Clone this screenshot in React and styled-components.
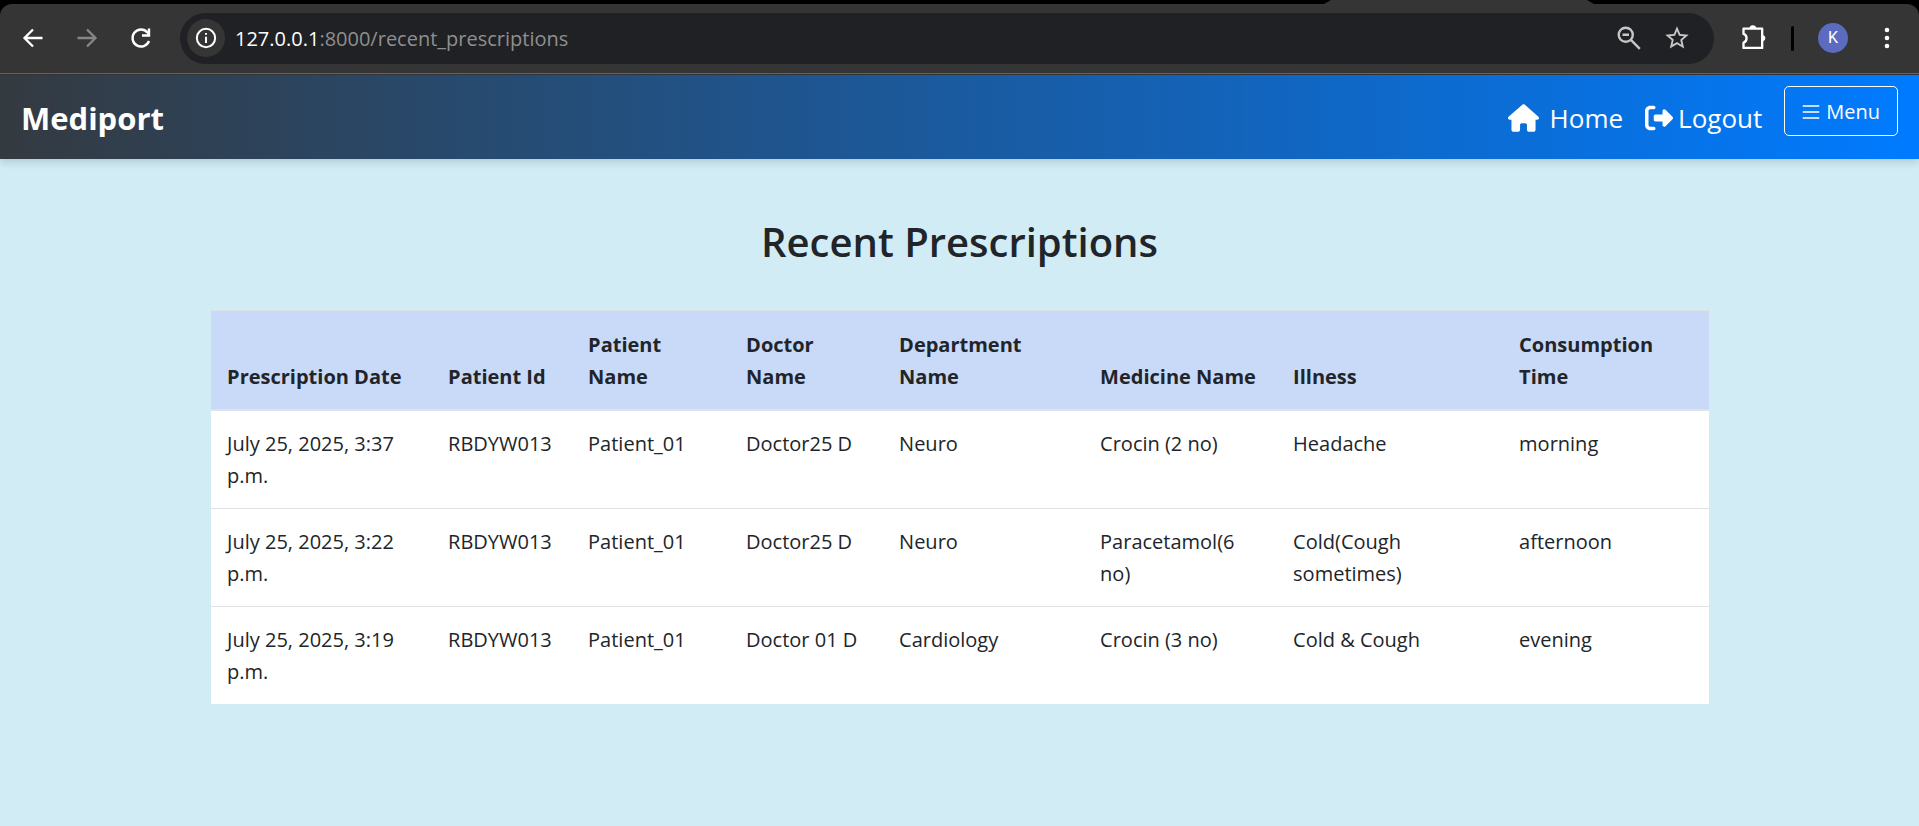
import React from "react";
import styled, { createGlobalStyle } from "styled-components";

const GlobalStyle = createGlobalStyle`
  *, *::before, *::after { box-sizing: border-box; }
  body {
    margin: 0;
    background: #d1ecf4;
    color: #212529;
    font-family: "Segoe UI", "Open Sans", sans-serif;
    font-size: 20px;
    line-height: 32px;
  }
`;

const Chrome = styled.header`
  background: #000;
`;

const TabStrip = styled.div`
  display: flex;
  justify-content: flex-end;
  height: 4px;
  padding-right: 325px;
`;

const ActiveTab = styled.div`
  width: 270px;
  background: #353535;
  clip-path: polygon(7px 0, 263px 0, 270px 100%, 0 100%);
`;

const Toolbar = styled.div`
  display: flex;
  align-items: center;
  height: 71px;
  padding: 0 13px 3px 14px;
  border-radius: 12px 12px 0 0;
  background: #353535;
  box-shadow: inset 0 -1px #353535, inset 0 -2px #666;
`;

const IconButton = styled.button`
  display: flex;
  align-items: center;
  justify-content: center;
  flex: none;
  width: 38px;
  height: 38px;
  margin-right: ${(p) => p.$gap || 0}px;
  padding: 0;
  border: 0;
  border-radius: 19px;
  background: ${(p) => p.$fill || "none"};
  color: ${(p) => p.$color || "#fff"};
`;

const AddressBar = styled.div`
  display: flex;
  align-items: center;
  flex: 1;
  height: 51px;
  margin-right: 21px;
  padding: 0 18px 0 7px;
  border-radius: 26px;
  background: #202124;
`;

const Address = styled.div`
  flex: 1;
  padding: 2px 0 0 10px;
  color: #8f8f8f;
  b { color: #fff; font-weight: 400; }
`;

const Divider = styled.div`
  width: 3px;
  height: 25px;
  margin: 0 24px 0 18px;
  border-radius: 2px;
  background: #000;
`;

const Avatar = styled.button`
  width: 30px;
  height: 30px;
  margin-right: 20px;
  padding: 0;
  border: 0;
  border-radius: 50%;
  background: #5c6bc0;
  color: #fff;
  font: 16px/30px Roboto, sans-serif;
`;

const Navbar = styled.nav`
  display: flex;
  align-items: center;
  height: 84px;
  padding: 2px 21px 0;
  background: linear-gradient(to right, #343a40, #007bff);
  box-shadow: 0 3px 8px rgba(0, 0, 0, 0.15);
`;

const Brand = styled.a`
  margin-right: auto;
  color: #fff;
  font-size: 31px;
  font-weight: 700;
  text-decoration: none;
`;

const NavLink = styled.a`
  display: flex;
  align-items: center;
  gap: ${(p) => p.$gap}px;
  margin-right: 22px;
  color: #fff;
  font-size: 26px;
  text-decoration: none;
`;

const MenuButton = styled.button`
  align-self: flex-start;
  display: flex;
  align-items: center;
  gap: 6px;
  height: 50px;
  margin-top: 9px;
  padding: 2px 17px 0;
  border: 1px solid #fff;
  border-radius: 5px;
  background: none;
  color: #fff;
  font: inherit;
`;

const Main = styled.main`
  padding: 55px 11% 0;
`;

const Title = styled.h1`
  margin: 0 0 40px;
  font-size: 40px;
  font-weight: 600;
  line-height: 56px;
  text-align: center;
`;

const Table = styled.table`
  width: 100%;
  table-layout: fixed;
  border-collapse: collapse;
  background: #fff;
`;

const HeadCell = styled.th`
  padding: 18px 16px 16px;
  border-top: 1px solid #dee2e6;
  border-bottom: 2px solid #dee2e6;
  background: #c9d9f8;
  font-weight: 700;
  text-align: left;
  vertical-align: bottom;
`;

const Cell = styled.td`
  padding: 17px 16px 16px;
  border-top: 1px solid #dee2e6;
  text-align: left;
  vertical-align: top;
`;

const Col = styled.col`
  width: ${(p) => p.$width}px;
`;

const columns = [
  ["Prescription Date", 221],
  ["Patient Id", 140],
  ["Patient Name", 158],
  ["Doctor Name", 153],
  ["Department Name", 201],
  ["Medicine Name", 193],
  ["Illness", 226],
  ["Consumption Time", 206],
];

const rows = [
  ["July 25, 2025, 3:37 p.m.", "RBDYW013", "Patient_01", "Doctor25 D", "Neuro", "Crocin (2 no)", "Headache", "morning"],
  ["July 25, 2025, 3:22 p.m.", "RBDYW013", "Patient_01", "Doctor25 D", "Neuro", "Paracetamol(6 no)", "Cold(Cough sometimes)", "afternoon"],
  ["July 25, 2025, 3:19 p.m.", "RBDYW013", "Patient_01", "Doctor 01 D", "Cardiology", "Crocin (3 no)", "Cold & Cough", "evening"],
];

const Stroke = ({ size = 24, width = 2, children }) => (
  <svg width={size} height={size} viewBox="0 0 24 24" fill="none" stroke="currentColor" strokeWidth={width} aria-hidden="true">
    {children}
  </svg>
);

const Solid = ({ size = 24, box = "0 0 24 24", height, children }) => (
  <svg width={size} height={height || size} viewBox={box} fill="currentColor" aria-hidden="true">
    {children}
  </svg>
);

export default function App() {
  return (
    <>
      <GlobalStyle />
      <Chrome>
        <TabStrip><ActiveTab /></TabStrip>
        <Toolbar>
          <IconButton aria-label="Back" $gap={16}>
            <Stroke width={2.3}><path d="M21.500 12H4M12 3.500L3.500 12L12 20.500" /></Stroke>
          </IconButton>
          <IconButton aria-label="Forward" $gap={16} $color="#868686">
            <Stroke width={2.3}><path d="M2.500 12H20M12 3.500L20.500 12L12 20.500" /></Stroke>
          </IconButton>
          <IconButton aria-label="Reload" $gap={20}>
            <Stroke width={2.4}><path d="M20 15A8.500 8.500 0 1 1 18.500 6.500L20 8.500M20 2.500V9.500H13" /></Stroke>
          </IconButton>
          <AddressBar>
            <IconButton aria-label="Site information" $fill="#353535">
              <Stroke size={22} width={2.2}><circle cx="12" cy="12" r="10" /><path d="M12 10.500V17.500M12 6.500V8.500" /></Stroke>
            </IconButton>
            <Address><b>127.0.0.1</b>:8000/recent_prescriptions</Address>
            <IconButton aria-label="Zoom" $gap={10} $color="#c7c7c7">
              <Stroke size={26} width={2.2}><circle cx="9" cy="9" r="6.500" /><path d="M6 9H12M13.500 13.500L22 22" /></Stroke>
            </IconButton>
            <IconButton aria-label="Bookmark this page" $color="#c7c7c7">
              <Solid size={28}><path d="M22 9.240l-7.190-.62L12 2 9.190 8.630 2 9.240l5.460 4.730L5.820 21 12 17.270 18.180 21l-1.630-7.030L22 9.240zM12 15.400l-3.760 2.270 1-4.280-3.320-2.880 4.380-.38L12 6.100l1.710 4.040 4.380.38-3.320 2.880 1 4.280L12 15.400z" /></Solid>
            </IconButton>
          </AddressBar>
          <IconButton aria-label="Extensions">
            <Stroke size={28}><path d="M3 4H19V20.500H3V16C6.500 15 6.500 9.500 3 8.500Z" strokeLinejoin="round" /><path d="M8 4A3 3 0 0 1 14 4ZM19.500 9.500A2.800 2.800 0 0 1 19.500 15Z" fill="currentColor" stroke="none" /></Stroke>
          </IconButton>
          <Divider />
          <Avatar aria-label="Profile">K</Avatar>
          <IconButton aria-label="Browser menu">
            <Solid size={24}><circle cx="12" cy="4" r="2.300" /><circle cx="12" cy="12" r="2.300" /><circle cx="12" cy="20" r="2.300" /></Solid>
          </IconButton>
        </Toolbar>
      </Chrome>
      <Navbar>
        <Brand href="#">Mediport</Brand>
        <NavLink href="#" $gap={11}>
          <Solid size={31} height={28} box="0 0 576 512"><path d="M575.800 255.500c0 18-15 32.100-32 32.100h-32l.7 160.200c0 2.700-.2 5.400-.5 8.100V472c0 22.100-17.900 40-40 40H456c-1.100 0-2.200 0-3.300-.1c-1.400 .1-2.800 .1-4.200 .1H416 392c-22.100 0-40-17.900-40-40V448 384c0-17.700-14.300-32-32-32H256c-17.700 0-32 14.300-32 32v64 24c0 22.100-17.900 40-40 40H160 128.100c-1.500 0-3-.1-4.500-.2c-1.200 .1-2.400 .2-3.600 .2H104c-22.100 0-40-17.900-40-40V360c0-.9 0-1.900 .1-2.800V287.600H32c-18 0-32-14-32-32.100c0-9 3-17 10-24L266.400 8c7-7 15-8 22-8s15 2 21 7L564.800 231.500c8 7 12 15 11 24z" /></Solid>
          Home
        </NavLink>
        <NavLink href="#" $gap={5}>
          <Solid size={28} height={28} box="0 0 512 512"><path d="M160 96c17.700 0 32-14.300 32-32s-14.300-32-32-32H96C43 32 0 75 0 128V384c0 53 43 96 96 96h64c17.700 0 32-14.300 32-32s-14.300-32-32-32H96c-17.700 0-32-14.300-32-32V128c0-17.700 14.300-32 32-32h64zM502.600 278.600c12.500-12.500 12.500-32.800 0-45.300l-128-128c-9.200-9.200-22.900-11.900-34.900-6.900S320 115.100 320 128v64H192c-17.700 0-32 14.300-32 32v64c0 17.700 14.300 32 32 32H320v64c0 12.900 7.800 24.600 19.800 29.600s25.700 2.200 34.900-6.900l128-128z" /></Solid>
          Logout
        </NavLink>
        <MenuButton>
          <Stroke size={18} width={2}><path d="M1 4H23M1 12H23M1 20H23" /></Stroke>
          Menu
        </MenuButton>
      </Navbar>
      <Main>
        <Title>Recent Prescriptions</Title>
        <Table>
          <colgroup>{columns.map(([name, width]) => <Col key={name} $width={width} />)}</colgroup>
          <thead>
            <tr>{columns.map(([name]) => <HeadCell key={name} scope="col">{name}</HeadCell>)}</tr>
          </thead>
          <tbody>
            {rows.map((row) => (
              <tr key={row[0]}>{row.map((value, i) => <Cell key={columns[i][0]}>{value}</Cell>)}</tr>
            ))}
          </tbody>
        </Table>
      </Main>
    </>
  );
}
